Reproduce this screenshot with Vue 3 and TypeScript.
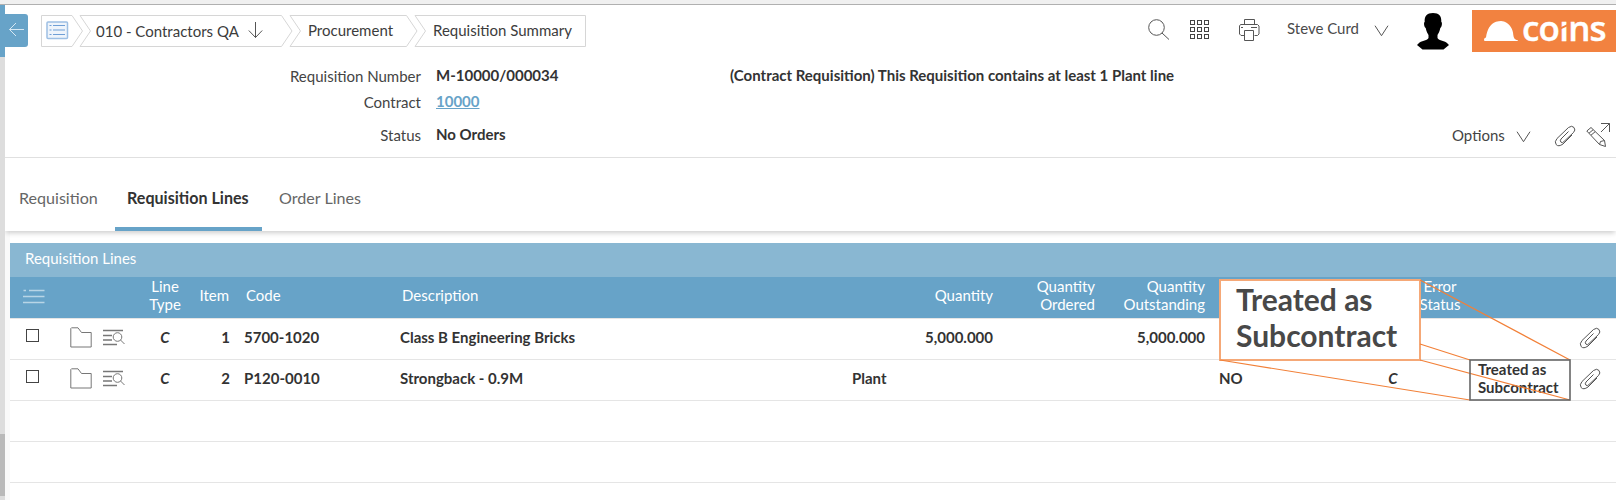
<script setup lang="ts">
interface Line {
  type: string
  item: number
  code: string
  description: string
  kind: string
  quantity: string
  outstanding: string
  subcontract: string
  error: string
  treated: boolean
}

const lines: Line[] = [
  { type: 'C', item: 1, code: '5700-1020', description: 'Class B Engineering Bricks', kind: '', quantity: '5,000.000', outstanding: '5,000.000', subcontract: '', error: '', treated: false },
  { type: 'C', item: 2, code: 'P120-0010', description: 'Strongback - 0.9M', kind: 'Plant', quantity: '', outstanding: '', subcontract: 'NO', error: 'C', treated: true },
]
const tabs = [
  { id: 'requisition', label: 'Requisition' },
  { id: 'lines', label: 'Requisition Lines' },
  { id: 'orders', label: 'Order Lines' },
]
const active = 'lines'
const dots = [0, 1, 2, 3, 4, 5, 6, 7, 8]
const clip = 'M14.500 6.500L7 14Q5.500 16 7 17.200T10 16.500L19.500 7.500Q22 5 20 2.500T14.500 2.500L3 13.500Q0 17 2.200 19.600T9 19L18 10'
</script>

<template>
  <div class="window">
    <div class="strip"></div>
    <div class="body">
      <aside class="rail">
        <div class="rail-blue"></div>
        <div class="rail-thumb"></div>
      </aside>
      <main class="main">
        <header class="topbar">
          <button class="back" aria-label="Back">
            <svg width="23" height="33" viewBox="0 0 23 33"><path d="M4.500 15.500H19M11 9L4.500 15.500L11 22" /></svg>
          </button>
          <nav class="crumbs">
            <svg class="crumb-lines" width="546" height="32" viewBox="0 0 546 32">
              <path d="M.5 .5H31L41.500 16L31 31.500H.5ZM39 .5H240.500L251 16L240.500 31.500H39L49.500 16ZM249 .5H365.500L376 16L365.500 31.500H249L259.500 16ZM374 .5H544.500V31.500H374L384.500 16Z" />
            </svg>
            <span class="crumb c-home">
              <svg width="23" height="19" viewBox="0 0 23 19"><rect x="1" y="1" width="20.500" height="16.500" rx="1" fill="#eef4fb" stroke="#9dbfe4" stroke-width="1.500" /><path d="M3.500 4.500H5.500M7 4.500H19M3.500 9H5.500M7 9H19M3.500 13.500H5.500M7 13.500H19" stroke="#6f9fd6" fill="none" /></svg>
            </span>
            <span class="crumb c-contract">
              <span>010 - Contractors QA</span>
              <svg width="15" height="17" viewBox="0 0 15 17"><path d="M7.500 0V15.500M.8 8.500L7.500 15.500L14.200 8.500" fill="none" stroke="#555" /></svg>
            </span>
            <span class="crumb c-proc">Procurement</span>
            <span class="crumb c-sum">Requisition Summary</span>
          </nav>
          <div class="tools">
            <svg class="i-search" width="22" height="22" viewBox="0 0 22 22"><circle cx="8.500" cy="8.500" r="7.800" /><path d="M14 14L21 20.500" /></svg>
            <svg class="i-grid" width="20" height="21" viewBox="0 0 20 21"><rect v-for="d in dots" :key="d" :x="0.5 + (d % 3) * 7" :y="1.5 + Math.floor(d / 3) * 7" width="4" height="4" /></svg>
            <svg class="i-print" width="22" height="23" viewBox="0 0 22 23"><path d="M6.500 5.500V.5H16.500V5.500M6 16.500H3L1.500 15V7L2.500 5.500H19.500L21 7V15L19.500 16.500H16.500M6.500 11.500H15.500V21.500H6.500ZM3 8.500H5M13 8.500H19" /></svg>
            <span class="user">Steve Curd</span>
            <svg class="i-chev" width="15" height="12" viewBox="0 0 15 12"><path d="M1 .7L7.500 10.700L14 .7" /></svg>
            <svg class="avatar" width="34" height="38" viewBox="0 0 34 38"><path d="M17 1C11 1 8.300 4 8.700 10C7.500 10 8 15 9.700 16C10.500 20 12 22 12.500 23V26C11 29 5 28.500 2.500 31.500L1 33L6.500 37.500H27.500L33 33L31.500 31.500C29 28.500 23 29 21.500 26V23C22 22 23.500 20 24.300 16C26 15 26.500 10 25.300 10C25.700 4 23 1 17 1Z" /></svg>
            <div class="logo">
              <svg width="36" height="22" viewBox="0 0 36 22"><path d="M1.500 21C.5 20 1 18 3 17.500C4 10 7 4 13 1.800Q18 .5 21 1.500C27 4 30 9 30.300 15C30.500 18 32 20 35 20.500V21Z" /></svg>
              <span class="brand">co<span class="dotless">ı</span>ns</span>
            </div>
          </div>
        </header>

        <section class="info">
          <span class="lbl">Requisition Number</span><span class="val">M-10000/000034</span>
          <span class="note">(Contract Requisition) This Requisition contains at least 1 Plant line</span>
          <span class="lbl">Contract</span><a class="val link">10000</a><span></span>
          <span class="lbl">Status</span><span class="val">No Orders</span>
          <div class="options">
            <span class="opt">Options</span>
            <svg class="o-chev" width="15" height="12" viewBox="0 0 15 12"><path d="M1 .7L7.500 10.700L14 .7" /></svg>
            <svg class="o-clip" width="23" height="22" viewBox="0 0 23 22"><path :d="clip" /></svg>
            <svg class="o-pen" width="24" height="24" viewBox="0 0 24 24"><path d="M15 .5H23.500V9M23.500 .5L15 9M.8 8L5 4.500L18.500 17.500L19.500 23.500L13.500 21.500L.8 8M3 10.200L7.200 6.700M5 12.200L9.200 8.700M13.500 21.500L14.500 18.500L18.500 17.500" /></svg>
          </div>
        </section>

        <nav class="tabs">
          <a v-for="t in tabs" :key="t.id" :class="['tab', 'tab-' + t.id, { active: t.id === active }]"><span>{{ t.label }}</span></a>
        </nav>

        <section class="table">
          <div class="title"><span>Requisition Lines</span></div>
          <div class="row head">
            <div class="check"><svg width="22" height="15" viewBox="0 0 22 15"><path d="M.5 1.500H3M6 1.500H21.500M0 7.500H21.500M0 13.500H21.500" stroke="#b8d5e6" stroke-width="1.500" fill="none" /></svg></div>
            <div></div>
            <div class="center">Line<br />Type</div>
            <div class="right h-item">Item</div>
            <div class="code">Code</div>
            <div class="desc">Description</div>
            <div></div>
            <div class="right">Quantity</div>
            <div class="right">Quantity<br />Ordered</div>
            <div class="right">Quantity<br />Outstanding</div>
            <div></div><div></div>
            <div class="center">Error<br />Status</div>
            <div></div><div></div>
          </div>
          <div v-for="l in lines" :key="l.item" class="row line">
            <div class="check"><i class="box"></i></div>
            <div class="icons">
              <svg width="22" height="21" viewBox="0 0 22 21"><path d="M.8 20V1.500L1.500 .8H8L11.500 5.500H21.200V20Z" /></svg>
              <svg width="22" height="17" viewBox="0 0 22 17"><path d="M0 1.500H20M0 6.500H9M0 11H9M0 15.500H14" stroke-width="1.300" /><circle cx="14.500" cy="8" r="4.300" /><path d="M17.500 11L21.500 15" /></svg>
            </div>
            <div class="center it">{{ l.type }}</div>
            <div class="right">{{ l.item }}</div>
            <div class="code">{{ l.code }}</div>
            <div class="desc">{{ l.description }}</div>
            <div class="kind">{{ l.kind }}</div>
            <div class="right">{{ l.quantity }}</div>
            <div></div>
            <div class="right">{{ l.outstanding }}</div>
            <div class="sub">{{ l.subcontract }}</div>
            <div class="center it">{{ l.error }}</div>
            <div></div>
            <div class="treated"><span v-if="l.treated">Treated as<br />Subcontract</span></div>
            <div class="clip"><svg width="23" height="22" viewBox="0 0 23 22"><path :d="clip" /></svg></div>
          </div>
          <div class="row"></div>
          <div class="row"></div>
        </section>
      </main>
    </div>

    <div class="callout"><span>Treated as<br />Subcontract</span></div>
    <svg class="rays" width="352" height="122" viewBox="0 0 352 122">
      <path d="M201 1L351 81M201 65L251 81M201 81L351 121M1 81L251 121" fill="none" stroke="#f28038" stroke-width="1.200" />
      <rect x="251" y="81" width="100" height="40" fill="none" stroke="#666" stroke-width="1.600" />
    </svg>
  </div>
</template>

<style>
body { overflow: hidden; }
</style>

<style scoped>
* { box-sizing: border-box; }
.window { position: relative; width: 1616px; height: 500px; overflow: hidden; background: #fff; font-family: Lato, "Noto Sans", sans-serif; font-size: 15px; color: #444; display: flex; flex-direction: column; white-space: nowrap; }
.strip { height: 5px; flex: none; background: #f0f0f0; border-bottom: 1px solid #b0b0b0; }
.body { display: flex; flex: 1; }
.rail { width: 5px; background: #ddd; position: relative; z-index: 2; }
.rail-blue { height: 52px; background: #67a3c8; margin-bottom: 377px; }
.rail-thumb { height: 62px; background: #bababa; }
.main { flex: 1; display: flex; flex-direction: column; min-width: 0; }
.topbar { height: 52px; display: flex; align-items: flex-start; flex: none; }
svg { display: block; flex: none; }
.back { width: 23px; height: 33px; margin-top: 9px; padding: 0; border: 0; background: #67a3c8; border-radius: 0 3px 3px 0; }
.back path { fill: none; stroke: #d7e8f3; }
.crumbs { position: relative; margin: 10px 0 0 13px; width: 546px; height: 32px; display: flex; align-items: center; color: #3c3c3c; }
.crumb-lines { position: absolute; left: 0; top: 0; }
.crumb-lines path { fill: none; stroke: #d6d6d6; }
.crumb { display: flex; align-items: center; position: relative; height: 30px; padding-bottom: 1px; }
.c-home { width: 55px; padding-left: 5px; }
.c-contract { width: 212px; gap: 9px; }
.c-contract svg { margin-top: -1px; }
.c-proc { width: 125px; }
.c-proc, .c-sum { padding-bottom: 2px; }
.tools { flex: 1; display: flex; align-items: flex-start; justify-content: flex-end; }
.tools svg path, .tools svg circle, .tools svg rect, .options path { fill: none; stroke: #555; }
.i-search { margin: 14px 20px 0 0; }
.i-grid { margin: 14px 28px 0 0; }
.tools .i-grid rect { stroke: #444; }
.i-print { margin: 14px 27px 0 0; }
.user { width: 72px; margin: 14px 15px 0 0; line-height: 18px; color: #4a4a4a; }
.i-chev { margin: 20px 27px 0 0; }
.avatar { margin: 7px 22px 0 0; }
.tools .avatar path { fill: #000; stroke: none; }
.logo { width: 144px; height: 42px; margin-top: 5px; background: #f28240; display: flex; align-items: flex-start; padding-left: 11px; }
.logo svg { margin-top: 10px; }
.tools .logo path { fill: #fff; stroke: none; }
.brand { color: #fff; font: 600 35px/42px "Open Sans", sans-serif; letter-spacing: -.8px; margin-left: 3px; margin-top: -3px; -webkit-text-stroke: .4px #fff; }
.dotless { position: relative; }
.dotless::after { content: ""; position: absolute; left: 0; top: 22px; width: 9px; height: 2px; background: #f28240; transform: rotate(-24deg); }
.info { height: 101px; border-bottom: 1px solid #e2e2e2; display: grid; grid-template-columns: 416px 294px 1fr; grid-template-rows: 26px 33px 33px; padding-top: 6px; line-height: 26px; flex: none; }
.lbl { text-align: right; color: #444; }
.val { padding-left: 15px; font-weight: 700; color: #333; margin-top: -1px; }
.link { color: #67a3c8; text-decoration: underline; }
.note { padding-left: 15px; font-weight: 700; margin-top: -1px; color: #333; }
.options { display: flex; justify-content: flex-end; align-items: flex-start; }
.opt { width: 53px; margin-right: 11px; }
.o-chev { margin: 9px 23px 0 0; }
.o-clip { margin: 3px 9px 0 0; }
.o-pen { margin: 1px 6px 0 0; }
.tabs { height: 73px; display: flex; align-items: flex-end; box-shadow: 0 3px 5px -1px rgba(0, 0, 0, .2); flex: none; font-size: 16.100px; z-index: 1; }
.tab { height: 47px; color: #666; line-height: 28px; border-bottom: 4px solid transparent; }
.tab-requisition { width: 110px; padding-left: 14px; }
.tab-lines { width: 147px; padding-left: 12px; }
.tab-orders { padding-left: 17px; }
.tab.active { border-color: #67a3c8; color: #333; font-weight: 700; }
.table { flex: 1; padding: 12px 0 0 5px; background: linear-gradient(90deg, #fafafa 5px, #fff 5px); }
.title { height: 34px; background: #89b7d2; color: #fff; line-height: 30px; padding-left: 15px; }
.row { height: 41px; border-bottom: 1px solid #e5e5e5; display: grid; grid-template-columns: 50px 85px 40px 45px 170px 450px 50px 93px 102px 110px 176px 24px 70px 95px 46px; align-items: center; }
.head { height: 42px; background: #67a3c8; color: #fff; line-height: 18px; background-clip: padding-box; padding-bottom: 5px; }
.line { color: #333; font-weight: 700; padding-bottom: 4px; }
.check { padding-left: 14px; }
.head .check { padding-left: 13px; margin-top: 2px; }
.line .check { padding-left: 16px; margin-top: -3px; }
.head .h-item { padding-right: 1px; }
.box { display: block; width: 13px; height: 13px; border: 1px solid #444; }
.icons { display: flex; align-items: center; gap: 11px; padding: 1px 0 0 10px; }
.icons path, .icons circle { fill: none; stroke: #777; }
.center { text-align: center; }
.right { text-align: right; }
.code { padding-left: 14px; }
.head .code { padding-left: 16px; }
.head .desc { padding-left: 2px; }
.it { font-style: italic; }
.kind { padding-left: 2px; }
.sub { padding-left: 14px; }
.treated { padding-left: 3px; line-height: 18px; font-size: 15px; }
.clip { padding: 1px 0 0 9px; }
.clip path { fill: none; stroke: #555; }
.callout { position: absolute; left: 1219px; top: 279px; width: 202px; height: 82px; background: #fff; border: 2px solid #f5a877; padding: 0 0 0 15px; font-size: 30px; line-height: 36px; font-weight: 700; color: #484848; }
.rays { position: absolute; left: 1219px; top: 279px; }
</style>
